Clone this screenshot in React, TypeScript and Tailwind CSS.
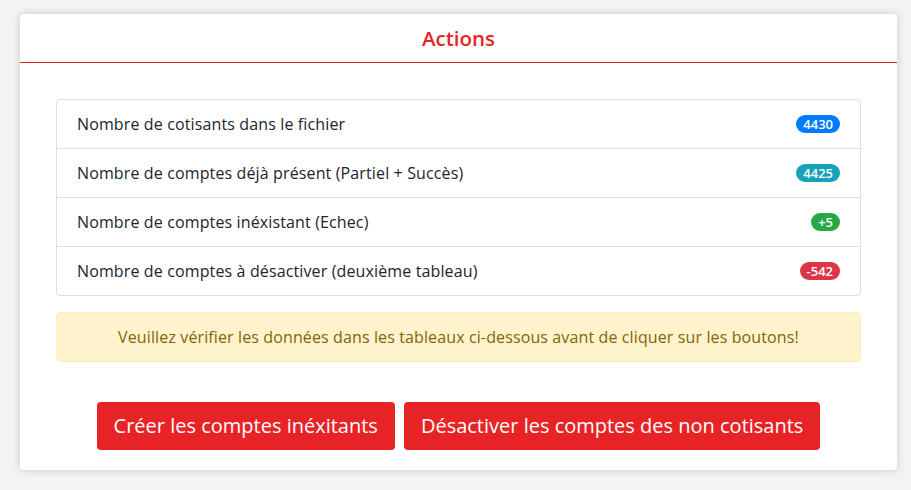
const rows = [
  { label: "Nombre de cotisants dans le fichier", value: "4430", color: "bg-[#007bff]" },
  { label: "Nombre de comptes déjà présent (Partiel + Succès)", value: "4425", color: "bg-[#17a2b8]" },
  { label: "Nombre de comptes inéxistant (Echec)", value: "+5", color: "bg-[#28a745]" },
  { label: "Nombre de comptes à désactiver (deuxième tableau)", value: "-542", color: "bg-[#dc3545]" },
];

export default function App() {
  return (
    <div className="min-h-screen bg-[#f3f3f3] px-5 pt-[14px] pb-5 font-['Open_Sans',sans-serif] text-[#212529]">
      <div className="w-[877px] rounded bg-white shadow-[0_0_8px_rgba(0,0,0,0.18)]">
        {/* Header */}
        <div className="flex h-[49px] items-center justify-center border-b border-[#e82325]">
          <h1 className="text-[20.5px] font-semibold text-[#e82325]">Actions</h1>
        </div>

        <div className="px-9 pt-9 pb-5">
          {/* Stats */}
          <ul className="rounded border border-[#dfdfdf]">
            {rows.map((r, i) => (
              <li
                key={r.label}
                className={
                  i > 0
                    ? "flex h-[49px] items-center justify-between border-t border-[#dfdfdf] px-5 text-[16px] tracking-[0.13px]"
                    : "flex h-[48px] items-center justify-between px-5 text-[16px] tracking-[0.13px]"
                }
              >
                <span>{r.label}</span>
                <span
                  className={`${r.color} rounded-full px-[7px] text-[13px] leading-[18px] font-semibold tracking-normal text-white`}
                >
                  {r.value}
                </span>
              </li>
            ))}
          </ul>

          {/* Warning */}
          <div className="mt-4 flex h-[50px] items-center justify-center rounded border border-[#ffeeba] bg-[#fff3cd] text-[16px] tracking-[0.12px] text-[#856404]">
            Veuillez vérifier les données dans les tableaux ci-dessous avant de cliquer sur les boutons!
          </div>

          {/* Buttons */}
          <div className="mt-10 flex justify-center gap-[9px]">
            <button className="h-[48px] rounded bg-[#e82325] px-[17px] text-[20px] text-white">
              Créer les comptes inéxitants
            </button>
            <button className="h-[48px] rounded bg-[#e82325] px-[17px] text-[20px] text-white">
              Désactiver les comptes des non cotisants
            </button>
          </div>
        </div>
      </div>
    </div>
  );
}
